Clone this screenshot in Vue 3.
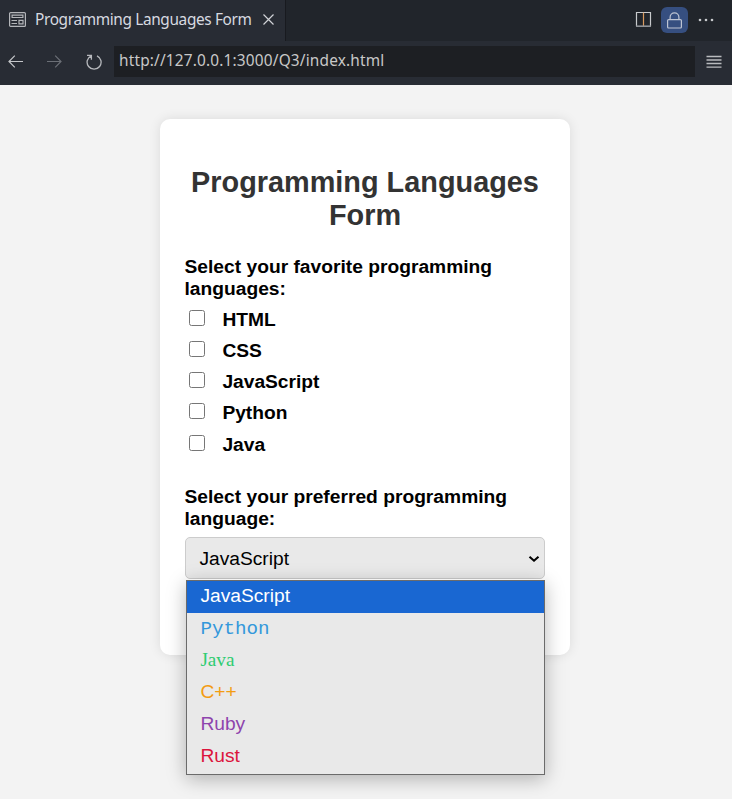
<script setup>
import { ref } from 'vue'

const languages = ['HTML', 'CSS', 'JavaScript', 'Python', 'Java']
const picked = ref([])
const options = [
  { name: 'JavaScript', cls: 'js' },
  { name: 'Python', cls: 'python' },
  { name: 'Java', cls: 'java' },
  { name: 'C++', cls: 'cpp' },
  { name: 'Ruby', cls: 'ruby' },
  { name: 'Rust', cls: 'rust' },
]
const selected = ref('JavaScript')
</script>

<template>
  <div class="window">
    <header class="tabs">
      <div class="tab">
        <svg class="tab-icon" width="17" height="15" viewBox="0 0 17 15" fill="none" stroke="#b4b6ba" stroke-width="1.2">
          <rect x="0.6" y="0.6" width="15.8" height="13.8" rx="1" />
          <path d="M3.1 3.1h10.8v2.4H3.1zM2.5 8.5h5.5M2.5 11.5h5.5M10 8.4h4v3.5h-4z" />
        </svg>
        <span class="tab-title">Programming Languages Form</span>
        <svg class="close" width="11" height="11" viewBox="0 0 11 11" fill="none" stroke="#d0d2d6" stroke-width="1.2">
          <path d="M0.5 0.5l10 10M10.5 0.5l-10 10" />
        </svg>
      </div>
      <div class="actions">
        <svg class="split" width="17" height="17" viewBox="0 0 17 17" fill="none" stroke="#c8cacd" stroke-width="1.2">
          <path d="M1.5 15.3V1.5h14v13.8" />
          <path d="M8.5 1.6v13.7" stroke="#d99a5e" />
          <path d="M1 15.2h15" stroke="#909398" stroke-width="1.6" />
        </svg>
        <span class="lock">
          <svg width="17" height="19" viewBox="0 0 17 19" fill="none" stroke="#bdc4d2" stroke-width="1.2">
            <rect x="1.6" y="8.6" width="13.8" height="8.4" rx="1" />
            <path d="M4.1 8.5V6.2a4.4 4.4 0 0 1 8.8 0v2.3" />
          </svg>
        </span>
        <svg class="dots" width="16" height="4" viewBox="0 0 16 4" fill="#c8cacd">
          <circle cx="2" cy="2" r="1.3" /><circle cx="8" cy="2" r="1.3" /><circle cx="14" cy="2" r="1.3" />
        </svg>
      </div>
    </header>
    <nav class="toolbar">
      <svg class="back" width="15" height="13" viewBox="0 0 15 13" fill="none" stroke="#c5c7ca" stroke-width="1.2">
        <path d="M6.8 0.7L1 6.5l5.8 5.8M1 6.5h14" />
      </svg>
      <svg class="forward" width="15" height="13" viewBox="0 0 15 13" fill="none" stroke="#6b6f76" stroke-width="1.2">
        <path d="M8.2 0.7L14 6.5l-5.8 5.8M14 6.5H0" />
      </svg>
      <svg class="reload" width="16" height="16" viewBox="0 0 16 16" fill="none" stroke="#b6b8bc" stroke-width="1.3">
        <path d="M1 1.3h4.4v4.5M5.2 1.8A7 7 0 1 0 11 1.8" />
      </svg>
      <div class="address"><span class="url">http://127.0.0.1:3000/Q3/index.html</span></div>
      <svg class="menu" width="16" height="14" viewBox="0 0 16 14" fill="none" stroke="#b9bbbe" stroke-width="1.3">
        <path d="M0.5 1.5h15M0.5 5h15M0.5 8.5h15M0.5 12.2h15" />
      </svg>
    </nav>
    <main class="page">
      <form class="card">
        <h2>Programming Languages Form</h2>
        <p class="label">Select your favorite programming languages:</p>
        <div class="checks">
          <label v-for="l in languages" :key="l" class="check">
            <input v-model="picked" type="checkbox" :value="l" />
            <span>{{ l }}</span>
          </label>
        </div>
        <p class="label second">Select your preferred programming language:</p>
        <div class="select">
          <span>{{ selected }}</span>
          <svg width="12" height="8" viewBox="0 0 12 8" fill="none" stroke="#000" stroke-width="2.1">
            <path d="M1.5 1.8L6 5.7l4.5-3.9" />
          </svg>
          <ul class="options">
            <li v-for="o in options" :key="o.name" :class="[o.cls, { active: o.name === selected }]" @click="selected = o.name">{{ o.name }}</li>
          </ul>
        </div>
      </form>
    </main>
  </div>
</template>

<style>
body { margin: 0; background: #f3f3f3; overflow: hidden; }
</style>

<style scoped>
* { box-sizing: border-box; }
svg { display: block; flex: none; }
.window {
  width: 732px;
  height: 799px;
  display: flex;
  flex-direction: column;
  background: #f3f3f3;
  font-family: "Liberation Sans", Arial, sans-serif;
  overflow: hidden;
}
.tabs {
  height: 41px;
  flex: none;
  display: flex;
  justify-content: space-between;
  background: #21252b;
}
.tab {
  width: 286px;
  height: 41px;
  display: flex;
  align-items: center;
  padding: 0 0 2px 9px;
  background: #282c34;
  border-right: 1px solid #181a1f;
}
.tab-title {
  width: 217px;
  margin-left: 9px;
  padding-top: 1px;
  font: 15.4px/22px "Noto Sans", sans-serif;
  letter-spacing: -0.36px;
  color: #d7dae0;
  white-space: nowrap;
}
.close { margin-left: 11px; }
.actions {
  display: flex;
  align-items: center;
  padding: 0 18px 1px 0;
}
.split { margin-bottom: 2px; }
.lock {
  width: 27px;
  height: 26px;
  margin-left: 9px;
  border-radius: 6px;
  background: #364f80;
  display: flex;
  align-items: center;
  justify-content: center;
}
.dots { margin: 0 0 1px 10px; }
.toolbar {
  height: 44px;
  flex: none;
  display: flex;
  align-items: center;
  padding: 0 10px 3px 8px;
  background: #282c34;
}
.forward { margin-left: 24px; }
.reload { margin-left: 24px; }
.address {
  width: 581px;
  height: 31px;
  margin-left: 12px;
  padding: 0 0 2px 5px;
  display: flex;
  align-items: center;
  background: #1d1f23;
}
.url {
  font: 15.4px/22px "Noto Sans", sans-serif;
  letter-spacing: 0.17px;
  color: #c8c8c8;
  white-space: nowrap;
}
.menu { margin-left: 11px; }
.page {
  flex: 1;
  padding: 34px 0 0 160px;
}
.card {
  width: 410px;
  height: 536px;
  padding: 47px 25px 0;
  border-radius: 10px;
  background: #fff;
  box-shadow: 0 0 12px rgba(0, 0, 0, 0.1);
}
h2 {
  margin: 0 0 24px;
  font-size: 28.85px;
  line-height: 33px;
  text-align: center;
  color: #333;
}
.label {
  margin: 0 0 0 -0.5px;
  font-size: 19.23px;
  line-height: 22px;
  font-weight: bold;
  color: #000;
}
.checks { margin-top: 9px; }
.check {
  height: 31.1px;
  display: flex;
  align-items: flex-start;
  font-size: 19.2px;
  line-height: 22px;
  font-weight: bold;
}
.check:last-child { height: 31.6px; padding-top: 0.5px; }
.check input {
  width: 16px;
  height: 16px;
  margin: 1px 17.4px 0 4px;
}
.second { margin-top: 21px; }
.select {
  position: relative;
  height: 42px;
  margin-top: 7px;
  padding: 2px 4px 0 13.4px;
  display: flex;
  align-items: center;
  justify-content: space-between;
  font-size: 19.2px;
  color: #000;
  background: #e9e9e9;
  border: 1px solid #ccc;
  border-radius: 5px;
}
.options {
  position: absolute;
  top: 42px;
  left: 0;
  width: 359px;
  height: 195px;
  margin: 0;
  padding: 0;
  list-style: none;
  background: #e9e9e9;
  border: 1px solid #6b6b6b;
  box-shadow: 0 -1px 0 #f4f4f4, 0 4px 18px rgba(0, 0, 0, 0.28);
}
.options li {
  height: 32px;
  padding-left: 13.4px;
  line-height: 30px;
}
.options .js { color: #f1c40f; }
.options .python { color: #3498db; font-family: "Liberation Mono", monospace; line-height: 32px; }
.options .java { color: #2ecc71; font-family: "Liberation Serif", serif; }
.options .cpp { color: #f39c12; }
.options .ruby { color: #8e44ad; }
.options .rust { color: #dc143c; }
.options .active { background: #1967d2; color: #fff; }
</style>
